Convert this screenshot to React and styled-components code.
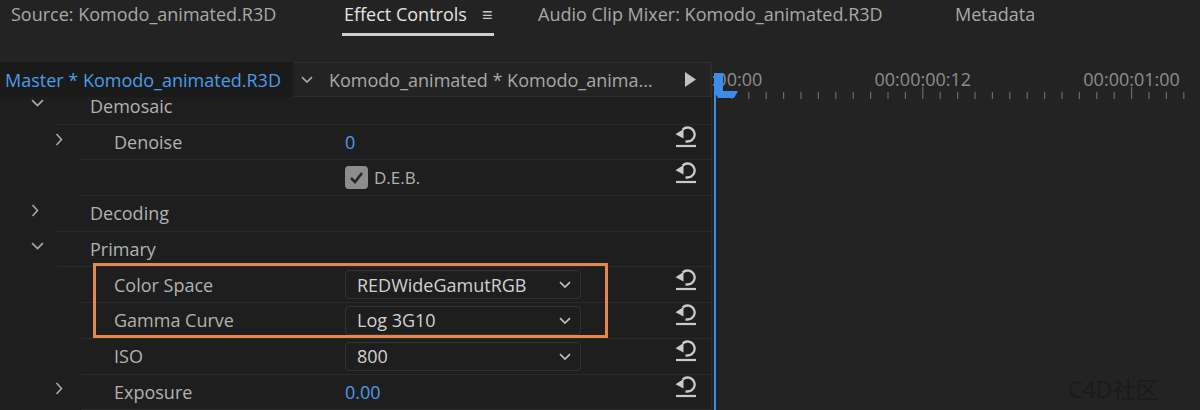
import React from 'react';
import styled, { createGlobalStyle } from 'styled-components';

const GlobalStyle = createGlobalStyle`
  html, body {
    margin: 0;
    padding: 0;
    background: #232323;
  }
  * {
    box-sizing: border-box;
  }
`;

const FONT = '"Open Sans", "Noto Sans", "Liberation Sans", sans-serif';
const ROW_H = 35.7;
const VALUE_X = 345;

const Screen = styled.div`
  position: relative;
  width: 1200px;
  height: 410px;
  overflow: hidden;
  background: #232323;
  font-family: ${FONT};
  display: flex;
  flex-direction: column;
`;

const TabBar = styled.div`
  display: flex;
  flex-flow: row nowrap;
  height: 62px;
  padding-left: 9px;
  flex-shrink: 0;
`;

const Tab = styled.div`
  flex: 0 0 ${(p) => p.w}px;
  height: 36px;
  display: flex;
  align-items: flex-start;
`;

const TabLabel = styled.div`
  display: flex;
  align-items: center;
  gap: 15px;
  height: 36px;
  padding: 0 2px 5px;
  font-size: 18px;
  line-height: 1;
  white-space: nowrap;
  color: ${(p) => (p.active ? '#e4e4e4' : '#a9a9a9')};
  border-bottom: 3px solid ${(p) => (p.active ? '#cfcfcf' : 'transparent')};
  margin-left: ${(p) => (p.active ? -3 : 0)}px;
`;

const MenuGlyph = styled.span`
  font-size: 18px;
  color: #c8c8c8;
`;

const Body = styled.div`
  display: flex;
  flex: 1;
  min-height: 0;
`;

const LeftPanel = styled.div`
  width: 712px;
  flex-shrink: 0;
  display: flex;
  flex-direction: column;
  background: #1e1e1e;
  border-right: 1px solid #2c2c2c;
`;

const HeaderRow = styled.div`
  display: flex;
  height: 35px;
  flex-shrink: 0;
  background: #232323;
  position: relative;
  z-index: 1;
`;

const MasterCell = styled.div`
  flex: 0 0 293px;
  display: flex;
  align-items: center;
  padding-left: 5px;
  background: #1a1a1a;
  color: #4c9de9;
  font-size: 18px;
  white-space: nowrap;
`;

const ClipCell = styled.div`
  flex: 1;
  display: flex;
  align-items: center;
  border: 1px solid #2e2e2e;
  border-left: none;
  padding: 0 14px 0 8px;
  gap: 16px;
  color: #a9a9a9;
  font-size: 18px;
  white-space: nowrap;
`;

const ClipName = styled.span`
  flex: 1;
`;

const Rows = styled.div`
  flex: 1;
  overflow: hidden;
`;

const RowList = styled.div`
  margin-top: -8px;
`;

const Row = styled.div`
  display: flex;
  height: ${ROW_H}px;
`;

const Twist = styled.div`
  flex: 0 0 ${(p) => p.indent}px;
  display: flex;
  align-items: center;
  padding-left: ${(p) => p.indent - 26}px;
  padding-bottom: 7px;
`;

const RowBody = styled.div`
  flex: 1;
  display: flex;
  align-items: center;
  padding-left: 33px;
  border-bottom: 1.5px solid #2a2a2a;
`;

const Label = styled.div`
  flex: 0 0 ${(p) => p.w}px;
  color: #b2b2b2;
  font-size: 18px;
  line-height: 1;
  white-space: nowrap;
`;

const Value = styled.div`
  flex: 1;
  display: flex;
  align-items: center;
`;

const NumberValue = styled.span`
  color: #4c9de9;
  font-size: 18px;
`;

const CheckBox = styled.span`
  width: 23px;
  height: 23px;
  border-radius: 4px;
  background: #8d8d8d;
  display: inline-flex;
  align-items: center;
  justify-content: center;
  margin-right: 6px;
`;

const CheckLabel = styled.span`
  color: #b2b2b2;
  font-size: 17px;
`;

const Select = styled.div`
  width: 236px;
  height: 29px;
  border: 1px solid #333;
  border-radius: 4px;
  display: flex;
  align-items: center;
  justify-content: space-between;
  padding: 0 9px 0 11px;
  color: #d2d2d2;
  font-size: 18px;
`;

const ResetCell = styled.div`
  flex: 0 0 50px;
  display: flex;
  justify-content: center;
  align-items: center;
  padding-bottom: 10px;
`;

const Timeline = styled.div`
  flex: 1;
  position: relative;
  background: #232323;
`;

const Ruler = styled.svg`
  display: block;
  font-family: ${FONT};
`;

const Highlight = styled.div`
  position: absolute;
  left: 93px;
  top: 263px;
  width: 515px;
  height: 75px;
  border: 3px solid #e8874c;
  pointer-events: none;
`;

const Watermark = styled.div`
  position: absolute;
  left: 1068px;
  top: 375px;
  font-family: "Noto Sans", "Noto Sans CJK SC", sans-serif;
  font-size: 23px;
  line-height: 1.3;
  color: #1b1b1b;
`;

const ChevronDown = ({ size = 12, color = '#a8a8a8' }) => (
  <svg width={size} height={size * 0.6} viewBox="0 0 12 7" fill="none">
    <polyline points="1,1 6,6 11,1" stroke={color} strokeWidth="1.6" />
  </svg>
);

const ChevronRight = ({ color = '#a8a8a8' }) => (
  <svg width="8" height="13" viewBox="0 0 8 13" fill="none">
    <polyline points="1.5,1 6.5,6.5 1.5,12" stroke={color} strokeWidth="1.6" />
  </svg>
);

const PlayGlyph = () => (
  <svg width="11" height="15" viewBox="0 0 11 15">
    <polygon points="0,0 11,7.5 0,15" fill="#c2c2c2" />
  </svg>
);

const CheckMark = () => (
  <svg width="15" height="13" viewBox="0 0 15 13" fill="none">
    <polyline points="2,7 6,11 13,2" stroke="#262626" strokeWidth="2.6" />
  </svg>
);

const ResetIcon = () => (
  <svg width="24" height="22" viewBox="0 0 24 22" fill="none">
    <path d="M8.6 3.6 A7 7 0 1 1 13.5 15.5 L11.5 15.5" stroke="#cacaca" strokeWidth="2.3" />
    <polygon points="1.5,8.2 9.5,3 9.5,12.5" fill="#cacaca" />
    <line x1="2" y1="20" x2="22" y2="20" stroke="#cacaca" strokeWidth="2.2" />
  </svg>
);

const rows = [
  { level: 1, twist: 'down', label: 'Demosaic' },
  { level: 2, twist: 'right', label: 'Denoise', kind: 'number', text: '0', reset: true },
  { level: 2, label: '', kind: 'check', text: 'D.E.B.', reset: true },
  { level: 1, twist: 'right', label: 'Decoding' },
  { level: 1, twist: 'down', label: 'Primary' },
  { level: 2, label: 'Color Space', kind: 'select', text: 'REDWideGamutRGB', reset: true },
  { level: 2, label: 'Gamma Curve', kind: 'select', text: 'Log 3G10', reset: true },
  { level: 2, label: 'ISO', kind: 'select', text: '800', reset: true },
  { level: 2, twist: 'right', label: 'Exposure', kind: 'number', text: '0.00', reset: true },
];

const renderValue = (row) => {
  if (row.kind === 'number') return <NumberValue>{row.text}</NumberValue>;
  if (row.kind === 'check') {
    return (
      <>
        <CheckBox><CheckMark /></CheckBox>
        <CheckLabel>{row.text}</CheckLabel>
      </>
    );
  }
  if (row.kind === 'select') {
    return (
      <Select>
        <span>{row.text}</span>
        <ChevronDown size={12} color="#c0c0c0" />
      </Select>
    );
  }
  return null;
};

const PropertyRow = ({ row }) => {
  const indent = row.level === 1 ? 57 : 81;
  return (
    <Row>
      <Twist indent={indent}>
        {row.twist === 'down' && <ChevronDown size={13} />}
        {row.twist === 'right' && <ChevronRight />}
      </Twist>
      <RowBody>
        <Label w={VALUE_X - indent - 33}>{row.label}</Label>
        <Value>{renderValue(row)}</Value>
        <ResetCell>{row.reset && <ResetIcon />}</ResetCell>
      </RowBody>
    </Row>
  );
};

const FRAME = 17.4;
const ticks = Array.from({ length: 28 }, (_, i) => i + 1);
const labels = [
  { f: 0, text: '00:00:00:00' },
  { f: 12, text: '00:00:00:12' },
  { f: 24, text: '00:00:01:00' },
];

const TimeRuler = () => (
  <Ruler width="488" height="348" viewBox="0 0 488 348">
    {labels.map((l) => (
      <text
        key={l.text}
        x={2 + l.f * FRAME}
        y="24"
        textAnchor="middle"
        fontSize="18"
        fill="#8e8e8e"
      >
        {l.text}
      </text>
    ))}
    {ticks.map((f) => (
      <line
        key={f}
        x1={2 + f * FRAME}
        x2={2 + f * FRAME}
        y1={f % 12 === 0 ? 25 : 30}
        y2="37"
        stroke="#6a6a6a"
        strokeWidth="1.2"
      />
    ))}
    <rect x="2" y="11" width="2" height="337" fill="#3b8ceb" />
    <rect x="2" y="11" width="9" height="19" fill="#3b8ceb" />
    <polygon points="2,29 26,29 22,36 6,36" fill="#3b8ceb" />
  </Ruler>
);

const App = () => (
  <Screen>
    <GlobalStyle />
    <TabBar>
      <Tab w={336}><TabLabel>Source: Komodo_animated.R3D</TabLabel></Tab>
      <Tab w={191}>
        <TabLabel active>
          Effect Controls
          <MenuGlyph>≡</MenuGlyph>
        </TabLabel>
      </Tab>
      <Tab w={417}><TabLabel>Audio Clip Mixer: Komodo_animated.R3D</TabLabel></Tab>
      <Tab w={200}><TabLabel>Metadata</TabLabel></Tab>
    </TabBar>
    <Body>
      <LeftPanel>
        <HeaderRow>
          <MasterCell>Master * Komodo_animated.R3D</MasterCell>
          <ClipCell>
            <ChevronDown size={12} />
            <ClipName>Komodo_animated * Komodo_anima...</ClipName>
            <PlayGlyph />
          </ClipCell>
        </HeaderRow>
        <Rows>
          <RowList>
            {rows.map((row, i) => (
              <PropertyRow key={i} row={row} />
            ))}
          </RowList>
        </Rows>
      </LeftPanel>
      <Timeline>
        <TimeRuler />
      </Timeline>
    </Body>
    <Highlight />
    <Watermark>C4D社区</Watermark>
  </Screen>
);

export default App;
